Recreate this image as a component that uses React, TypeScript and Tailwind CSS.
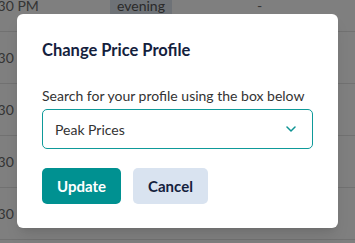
import React from "react";

const rows = [0, 1, 2, 3, 4];

export default function App() {
  return (
    <div
      className="relative h-[243px] w-[355px] overflow-hidden bg-white"
      style={{ fontFamily: "Lato, 'Open Sans', sans-serif" }}
    >
      {/* Table behind the dialog */}
      <div className="-mt-[20px]">
        {rows.map((r) => (
          <div key={r} className="flex h-[52px] items-center border-b border-[#e2e2e2] text-[14px] text-[#6a6a6a]">
            <span className="-ml-[14px] w-[124px] shrink-0">8:30 PM</span>
            <span className="w-[147px] shrink-0">
              {r === 0 && (
                <span className="inline-block rounded bg-[#dce4ee] px-[7px] leading-[22px] text-[#555]">
                  evening
                </span>
              )}
            </span>
            <span>-</span>
          </div>
        ))}
      </div>

      {/* Overlay */}
      <div className="absolute inset-0 bg-black/50" />

      {/* Dialog */}
      <div className="absolute left-[17px] top-[14px] w-[321px] rounded-md bg-white px-[25px] pb-[24px] pt-[24px] shadow-lg">
        <h2 className="text-[16.5px] font-bold leading-[24px] text-[#14213d]">Change Price Profile</h2>
        <p className="mt-[24px] text-[14px] leading-[20px] text-[#333]">Search for your profile using the box below</p>
        <div className="mt-[3px] flex h-[40px] w-[271px] items-center justify-between rounded-[5px] border border-[#0e9a9a] pl-[12px] pr-[16px]">
          <span className="text-[14px] text-[#333]">Peak Prices</span>
          <svg width="10" height="6" viewBox="0 0 10 6" fill="none">
            <path d="M1 1l4 4 4-4" stroke="#0e9393" strokeWidth="1.5" strokeLinecap="round" strokeLinejoin="round" />
          </svg>
        </div>
        <div className="mt-[19px] flex gap-[12px]">
          <button className="h-[36px] w-[79px] rounded-[5px] bg-[#009191] text-[15px] font-bold text-white">Update</button>
          <button className="h-[36px] w-[75px] rounded-[5px] bg-[#d9e3f0] text-[15px] font-bold text-[#14213d]">Cancel</button>
        </div>
      </div>
    </div>
  );
}
